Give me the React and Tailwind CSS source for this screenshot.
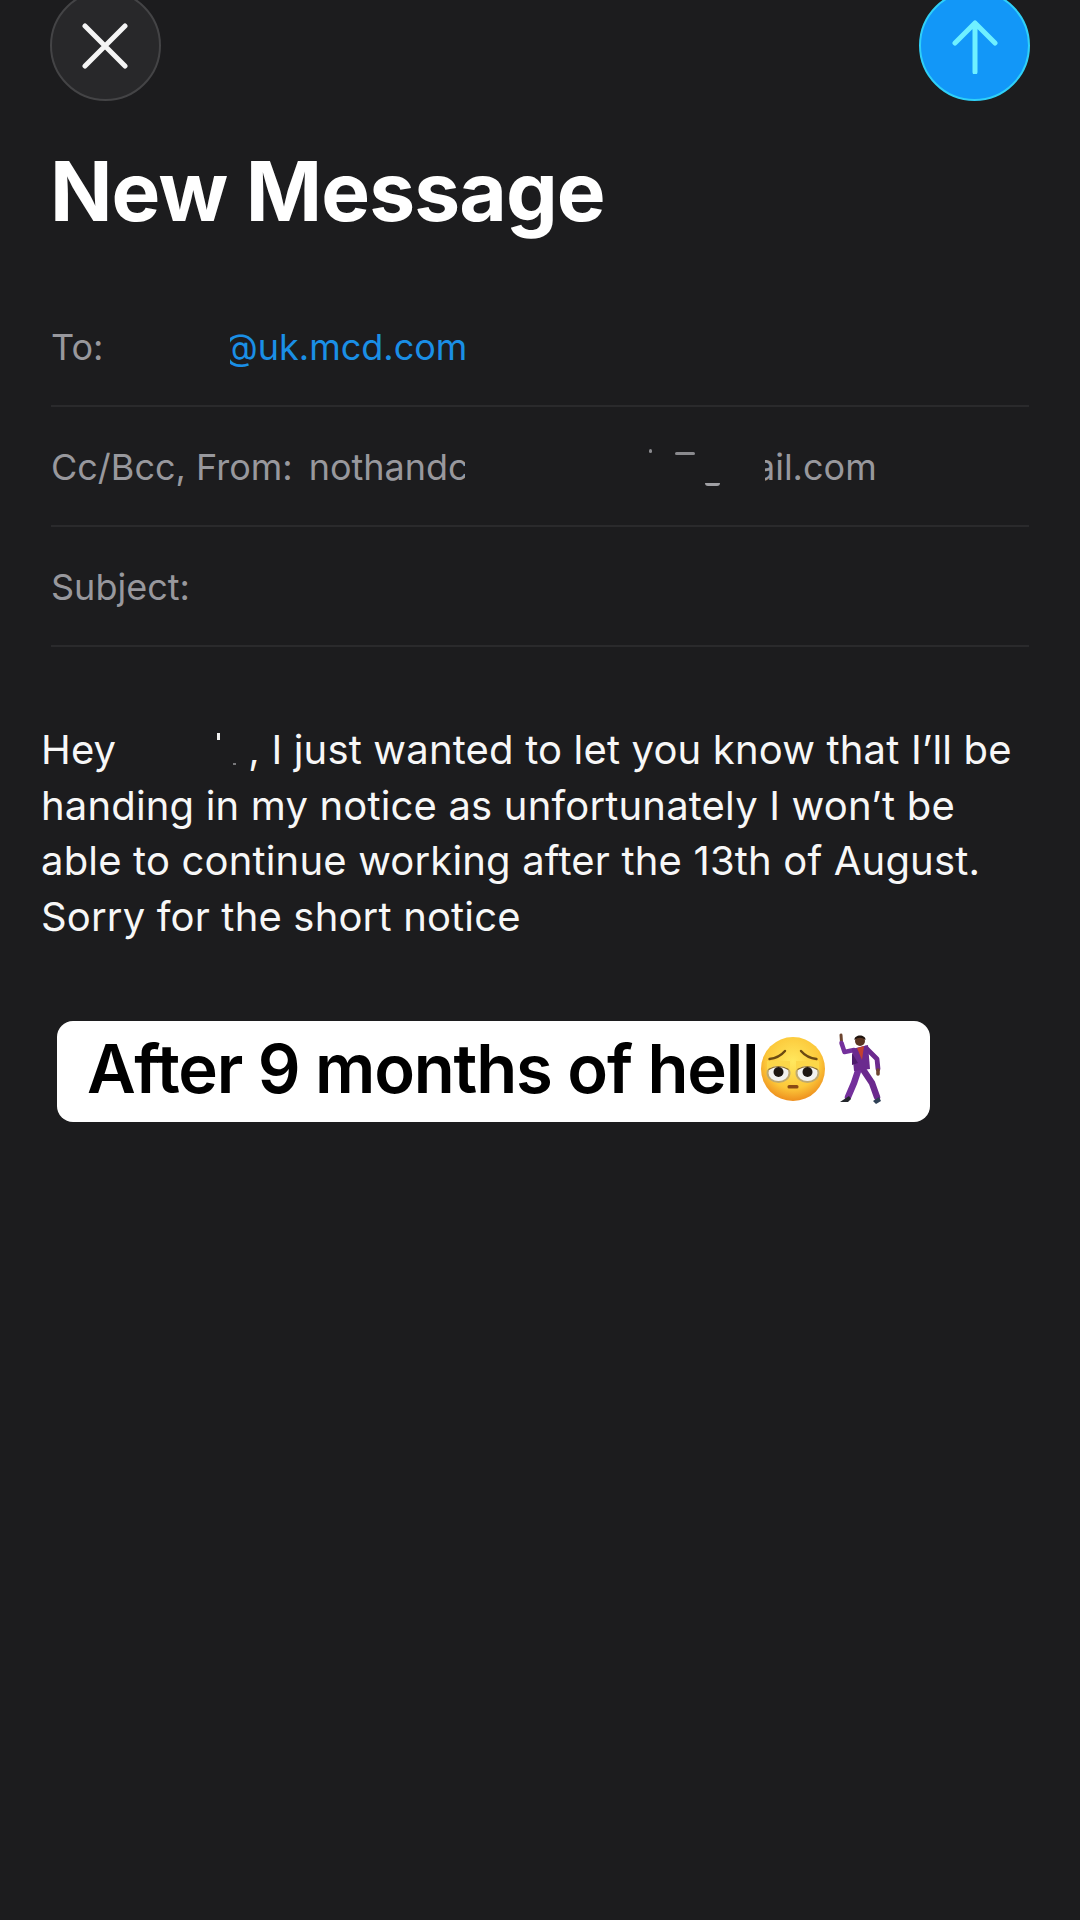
import React from "react";

function FaceEmoji() {
  return (
    <svg width="70" height="70" viewBox="0 0 70 70" className="shrink-0">
      <defs>
        <radialGradient id="fg" cx="50%" cy="38%" r="62%">
          <stop offset="0%" stopColor="#ffe85e" />
          <stop offset="68%" stopColor="#fcc83a" />
          <stop offset="100%" stopColor="#ee8f1e" />
        </radialGradient>
      </defs>
      <circle cx="35" cy="35" r="32" fill="url(#fg)" />
      <path d="M11.5 25 Q21 24 27 17" stroke="#6b4a12" strokeWidth="2.4" fill="none" strokeLinecap="round" />
      <path d="M58.5 25 Q49 24 43 17" stroke="#6b4a12" strokeWidth="2.4" fill="none" strokeLinecap="round" />
      <ellipse cx="20.5" cy="39" rx="12" ry="10" fill="#bfa96e" />
      <ellipse cx="49.5" cy="39" rx="12" ry="10" fill="#bfa96e" />
      <ellipse cx="20.5" cy="39" rx="10" ry="8" fill="#f2f2f0" />
      <ellipse cx="49.5" cy="39" rx="10" ry="8" fill="#f2f2f0" />
      <circle cx="20.5" cy="38" r="5" fill="#1d1712" />
      <circle cx="49.5" cy="38" r="5" fill="#1d1712" />
      <path d="M9 36 Q20.5 28 32 36 L32 27 L9 27 Z" fill="#fcd749" />
      <path d="M38 36 Q49.5 28 61 36 L61 27 L38 27 Z" fill="#fcd749" />
      <path d="M10.5 35.5 Q20.5 29.5 30.5 35.5" stroke="#8c6a20" strokeWidth="1.2" fill="none" />
      <path d="M39.5 35.5 Q49.5 29.5 59.5 35.5" stroke="#8c6a20" strokeWidth="1.2" fill="none" />
      <rect x="29.5" y="51" width="11" height="3.6" rx="1.6" fill="#8a4a14" />
    </svg>
  );
}

function DancerEmoji() {
  return (
    <svg width="46" height="72" viewBox="0 0 46 72" className="shrink-0">
      <g fill="none" strokeLinecap="round" strokeLinejoin="round">
        <path d="M3 2 L3.5 9" stroke="#6d4530" strokeWidth="3" />
        <path d="M3.5 10 L6.5 19 L16 17" stroke="#74309c" strokeWidth="4.5" />
        <path d="M28 15 L39 26 L40 36" stroke="#6b2a8e" strokeWidth="4.8" />
        <path d="M40 37 L40 41" stroke="#6d4530" strokeWidth="3.6" />
        <path d="M26 38 L34 50 L39 64" stroke="#6b2a8e" strokeWidth="6.5" />
        <path d="M20 38 L16 50 L10 64" stroke="#74309c" strokeWidth="6.5" />
      </g>
      <path d="M14 16 L30 12 L32 36 L16 38 Z" fill="#6b2a8e" />
      <path d="M19 15 L26 13 L24 27 Z" fill="#c3412f" />
      <path d="M14 20 L20 30 L14 32 Z" fill="#4d1c6b" />
      <circle cx="22" cy="8" r="5" fill="#5a3522" />
      <path d="M16.5 7 C16 1 28 1 27.5 7 C24 4 20 4 16.5 7 Z" fill="#1f130d" />
      <path d="M2 69 L11 63 L13 66 L10 69 Z" fill="#23262b" />
      <path d="M35 68 L41 64 L43 68 L38 71 Z" fill="#2f4156" />
    </svg>
  );
}

function Row({ children }) {
  return (
    <div className="h-[120px] pt-[2px] flex items-center border-b-2 border-[#2a2a2c] text-[36px] text-[#98989d] whitespace-nowrap">
      {children}
    </div>
  );
}

export default function App() {
  return (
    <div className="relative w-[1080px] h-[1920px] overflow-hidden bg-[#1c1c1e] text-white font-['Inter','Liberation_Sans',sans-serif]">
      <div className="flex justify-between px-[50px] -mt-[10px]">
        <div className="w-[111px] h-[111px] rounded-full bg-[#28282a] border-2 border-[#444446] flex items-center justify-center">
          <svg width="46" height="46" viewBox="0 0 46 46" fill="none" stroke="#f5f5f5" strokeWidth="5" strokeLinecap="round" className="-ml-[2px]">
            <path d="M3 3 L43 43 M43 3 L3 43" />
          </svg>
        </div>
        <div className="w-[111px] h-[111px] rounded-full bg-[#1297f8] border-2 border-[#2fd0f8] flex items-center justify-center">
          <svg width="46" height="54" viewBox="0 0 46 54" fill="none" stroke="#6ff0ff" strokeWidth="5" strokeLinecap="round" strokeLinejoin="round" className="mt-[2px]">
            <path d="M23 52 L23 3 M3 23 L23 3 L43 23" />
          </svg>
        </div>
      </div>

      <h1 className="ml-[50px] mt-[41px] text-[82px] leading-[100px] font-bold tracking-[-0.9px]">New Message</h1>

      <div className="mx-[51px] mt-[45px]">
        <Row>
          <span>To:</span>
          <span className="ml-[127px] w-[237px] overflow-hidden flex justify-end text-[#1a8fe6]">@uk.mcd.com</span>
        </Row>
        <Row>
          <span>Cc/Bcc, From:</span>
          <span className="ml-[16px] w-[156px] overflow-hidden">nothandc</span>
          <span className="ml-[300px] w-[112px] overflow-hidden flex justify-end">ail.com</span>
        </Row>
        <Row>
          <span>Subject:</span>
        </Row>
      </div>

      <span className="absolute left-[649px] top-[449px] w-[3px] h-[4px] rounded-full bg-[#8a8a8e]" />
      <span className="absolute left-[675px] top-[452px] w-[20px] h-[3px] rounded-full bg-[#8a8a8e]" />
      <span className="absolute left-[705px] top-[483px] w-[15px] h-[3px] rounded-b-full bg-[#a0a0a4]" />

      <div className="ml-[41px] mt-[75px] w-[1000px] text-[40px] leading-[55.6px] tracking-[0.17px] text-[#f7f7f7] whitespace-nowrap">
        <div className="flex">
          <span>Hey</span>
          <span className="ml-[132px]">, I just wanted to let you know that I’ll be</span>
        </div>
        <div>handing in my notice as unfortunately I won’t be</div>
        <div>able to continue working after the 13th of August.</div>
        <div>Sorry for the short notice</div>
      </div>

      <span className="absolute left-[217px] top-[733px] w-[3px] h-[7px] bg-[#f0f0f0]" />
      <span className="absolute left-[233px] top-[763px] w-[3px] h-[2px] bg-[#77777a]" />

      <div className="ml-[57px] mt-[77px] w-[873px] h-[101px] bg-white rounded-[16px] pl-[30px] pb-[5px] flex items-center whitespace-nowrap text-black text-[67px] font-semibold tracking-[-1.2px]">
        <span>After 9 months of hell</span>
        <FaceEmoji />
        <span className="ml-[10px]"><DancerEmoji /></span>
      </div>
    </div>
  );
}
